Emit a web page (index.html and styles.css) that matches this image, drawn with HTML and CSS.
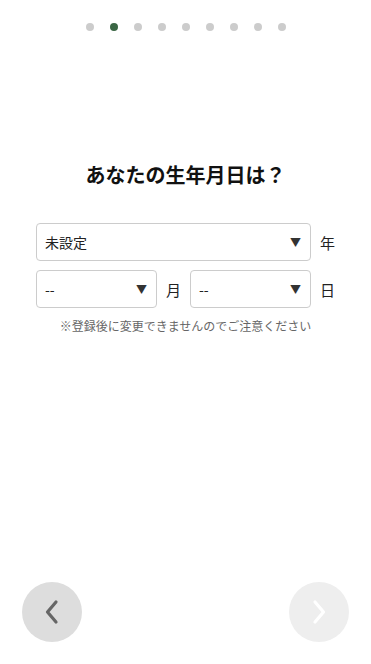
FILE: index.html
```html
<!DOCTYPE html>
<html lang="ja">
<head>
<meta charset="utf-8">
<link rel="stylesheet" href="styles.css">
</head>
<body>
<div class="page">
  <div class="dots">
    <span class="dot"></span>
    <span class="dot active"></span>
    <span class="dot"></span>
    <span class="dot"></span>
    <span class="dot"></span>
    <span class="dot"></span>
    <span class="dot"></span>
    <span class="dot"></span>
    <span class="dot"></span>
  </div>
  <h1 class="title">あなたの生年月日は？</h1>
  <div class="form">
    <div class="select wide"><span class="value">未設定</span><span class="arrow">▼</span></div>
    <span class="unit">年</span>
    <div class="select"><span class="value">--</span><span class="arrow">▼</span></div>
    <span class="unit">月</span>
    <div class="select"><span class="value">--</span><span class="arrow">▼</span></div>
    <span class="unit">日</span>
  </div>
  <p class="note">※登録後に変更できませんのでご注意ください</p>
  <div class="nav">
    <button class="circle prev" type="button">
      <svg width="60" height="60" viewBox="0 0 60 60"><path d="M34 20 L25.5 30 L34 40" fill="none" stroke="#666" stroke-width="3.2" stroke-linecap="round" stroke-linejoin="round"/></svg>
    </button>
    <button class="circle next" type="button">
      <svg width="60" height="60" viewBox="0 0 60 60"><path d="M26 20 L34.5 30 L26 40" fill="none" stroke="#fff" stroke-width="3.2" stroke-linecap="round" stroke-linejoin="round"/></svg>
    </button>
  </div>
</div>
</body>
</html>
```
FILE: styles.css
```css
html, body {
  margin: 0;
  padding: 0;
  background: #fff;
}
body {
  font-family: "Noto Sans CJK JP", "Noto Sans", sans-serif;
  color: #222;
}
.page {
  width: 371px;
  height: 664px;
  display: flex;
  flex-direction: column;
  box-sizing: border-box;
}
.dots {
  display: flex;
  justify-content: center;
  gap: 16px;
  padding-top: 23px;
  height: 8px;
}
.dot {
  width: 8px;
  height: 8px;
  border-radius: 50%;
  background: #cccccc;
}
.dot.active {
  background: #3a6644;
}
.title {
  margin: 130px 0 0;
  font-size: 20px;
  line-height: 28px;
  font-weight: 700;
  text-align: center;
  color: #111;
}
.form {
  margin: 34px 36px 0;
  display: grid;
  grid-template-columns: 1fr 15px 1fr 15px;
  column-gap: 9px;
  row-gap: 9px;
  align-items: center;
}
.select {
  height: 38px;
  box-sizing: border-box;
  border: 1px solid #cccccc;
  border-radius: 4px;
  display: flex;
  align-items: center;
  justify-content: space-between;
  padding: 0 9px 0 8px;
  font-size: 14px;
  color: #222;
}
.select.wide {
  grid-column: 1 / 4;
}
.arrow {
  font-size: 11px;
  color: #333;
}
.unit {
  font-size: 15px;
  color: #222;
  text-align: center;
}
.note {
  margin: 9px 0 0;
  text-align: center;
  font-size: 12px;
  line-height: 18px;
  color: #666;
}
.nav {
  margin-top: auto;
  display: flex;
  justify-content: space-between;
  padding: 0 22px 22px;
}
.circle {
  width: 60px;
  height: 60px;
  border-radius: 50%;
  border: none;
  padding: 0;
  display: flex;
  align-items: center;
  justify-content: center;
}
.circle.prev {
  background: #dddddd;
}
.circle.next {
  background: #eeeeee;
}
```
